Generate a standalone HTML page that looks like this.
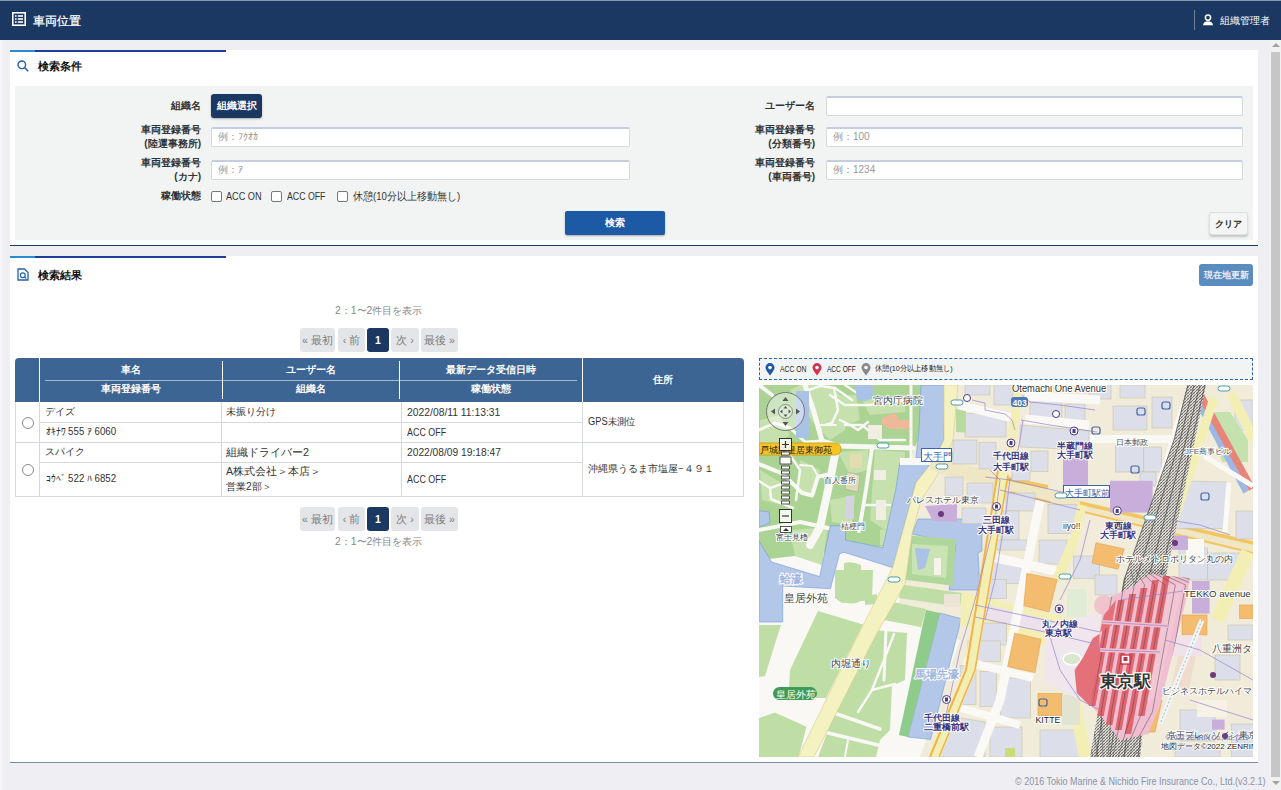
<!DOCTYPE html>
<html lang="ja">
<head>
<meta charset="utf-8">
<style>
*{box-sizing:border-box;margin:0;padding:0}
html,body{width:1281px;height:790px;overflow:hidden}
body{position:relative;background:#eeeef3;font-family:"Liberation Sans",sans-serif;color:#333;font-size:11px}
.abs{position:absolute}
#hdr{left:0;top:0;width:1281px;height:40px;background:#1b3862;border-top:1px solid #8d99ab}
#hdr .t{left:33px;top:11px;color:#fff;font-size:12.2px;-webkit-text-stroke:0.25px #fff;line-height:18px;white-space:nowrap}
#hdr .u{left:1220px;top:13px;color:#fff;font-size:9.5px;line-height:14px;white-space:nowrap}
#hdr .sep{left:1194px;top:9px;width:1px;height:20px;background:#6f7f98}
.panel{background:#fff}
.lbl{font-weight:bold;color:#333;font-size:10px;line-height:14px;text-align:right;white-space:nowrap}
.inp{background:#fff;border:1px solid #d6d9de;border-top:2px solid #c5cde0;border-radius:2px;color:#999;font-size:10px;line-height:15px;padding-left:6px;white-space:nowrap}
.pg{height:24px;background:#e3e5e8;border-radius:3px;color:#7d7d7d;font-size:10.5px;line-height:24px;text-align:center;white-space:nowrap}
.pg.a{background:#1b3862;color:#fff;font-weight:bold}
.cnt{color:#888;font-size:10.4px;line-height:14px;white-space:nowrap}
table{border-collapse:collapse}
.th{color:#fff;font-weight:bold;font-size:9.5px;text-align:center;white-space:nowrap;line-height:14px}
.td{color:#333;font-size:10px;line-height:14px;white-space:nowrap}
.hl{background:#d5d9dc}
.cb{width:11px;height:11px;border:1px solid #777;border-radius:2px;background:#fff}
.lg{font-size:8.5px;line-height:12px;color:#222;white-space:nowrap}
.cbl{font-size:10.5px;line-height:14px;color:#333;white-space:nowrap}
</style>
</head>
<body>
<!-- left page strip -->
<div class="abs" style="left:0;top:40px;width:2px;height:750px;background:#f6f6f9"></div>

<!-- header -->
<div id="hdr" class="abs">
  <svg class="abs" style="left:12px;top:11px" width="14" height="14" viewBox="0 0 14 14">
    <rect x="0.8" y="0.8" width="12.4" height="12.4" fill="none" stroke="#fff" stroke-width="1.6"/>
    <rect x="3" y="3.2" width="1.6" height="1.6" fill="#fff"/><rect x="5.8" y="3.2" width="5.2" height="1.6" fill="#fff"/>
    <rect x="3" y="6.2" width="1.6" height="1.6" fill="#fff"/><rect x="5.8" y="6.2" width="5.2" height="1.6" fill="#fff"/>
    <rect x="3" y="9.2" width="1.6" height="1.6" fill="#fff"/><rect x="5.8" y="9.2" width="5.2" height="1.6" fill="#fff"/>
  </svg>
  <div class="abs t">車両位置</div>
  <div class="abs sep"></div>
  <svg class="abs" style="left:1202px;top:13px" width="12" height="12" viewBox="0 0 12 12">
    <circle cx="6" cy="3.6" r="2.6" fill="none" stroke="#fff" stroke-width="1.5"/>
    <path d="M1 11.2 Q1.5 7.2 6 7.2 Q10.5 7.2 11 11.2 Z" fill="#fff"/>
  </svg>
  <div class="abs u">組織管理者</div>
</div>

<!-- scrollbar -->
<div class="abs" style="left:1269px;top:40px;width:12px;height:750px;background:#f1f1f1"></div>
<div class="abs" style="left:1271px;top:52px;width:9px;height:725px;background:#c6c6c6"></div>
<div class="abs" style="left:1272px;top:43px;width:0;height:0;border-left:4px solid transparent;border-right:4px solid transparent;border-bottom:4px solid #a3a3a3"></div>
<div class="abs" style="left:1272px;top:781px;width:0;height:0;border-left:4px solid transparent;border-right:4px solid transparent;border-top:4px solid #a3a3a3"></div>

<!-- panel 1 -->
<div class="abs panel" style="left:10px;top:50px;width:1248px;height:196px;border-bottom:1px solid #1b3862"></div>
<div class="abs" style="left:10px;top:50px;width:25px;height:2px;background:#2b8ad0"></div>
<div class="abs" style="left:35px;top:50px;width:191px;height:2px;background:#1d3f96"></div>
<svg class="abs" style="left:17px;top:60px" width="12" height="12" viewBox="0 0 12 12">
  <circle cx="4.8" cy="4.8" r="3.8" fill="none" stroke="#2563a8" stroke-width="1.4"/>
  <line x1="7.6" y1="7.6" x2="11.2" y2="11.2" stroke="#2563a8" stroke-width="1.5"/>
</svg>
<div class="abs" style="left:38px;top:58px;font-size:11px;line-height:16px;font-weight:bold;color:#111">検索条件</div>

<div class="abs" style="left:15px;top:86px;width:1238px;height:154px;background:#f1f4f3"></div>

<div class="abs lbl" style="left:100px;top:99px;width:101px">組織名</div>
<div class="abs" style="left:211px;top:94px;width:51px;height:24px;background:#1b3862;border-radius:3px;color:#fff;font-weight:bold;font-size:9.75px;line-height:24px;text-align:center;box-shadow:0 1px 2px rgba(0,0,0,.3)">組織選択</div>
<div class="abs lbl" style="left:700px;top:99px;width:115px">ユーザー名</div>
<div class="abs inp" style="left:826px;top:96px;width:417px;height:20px"></div>

<div class="abs lbl" style="left:100px;top:123px;width:101px">車両登録番号<br>(陸運事務所)</div>
<div class="abs inp" style="left:211px;top:127px;width:419px;height:20px">例：ﾌｸｵｶ</div>
<div class="abs lbl" style="left:700px;top:123px;width:115px">車両登録番号<br>(分類番号)</div>
<div class="abs inp" style="left:826px;top:127px;width:417px;height:20px">例：100</div>

<div class="abs lbl" style="left:100px;top:156px;width:101px">車両登録番号<br>(カナ)</div>
<div class="abs inp" style="left:211px;top:160px;width:419px;height:20px">例：ｱ</div>
<div class="abs lbl" style="left:700px;top:156px;width:115px">車両登録番号<br>(車両番号)</div>
<div class="abs inp" style="left:826px;top:160px;width:417px;height:20px">例：1234</div>

<div class="abs lbl" style="left:100px;top:189px;width:101px">稼働状態</div>
<div class="abs cb" style="left:211px;top:191px"></div><div class="abs cbl" style="left:226px;top:189px;transform:scaleX(.87);transform-origin:0 0">ACC ON</div>
<div class="abs cb" style="left:271px;top:191px"></div><div class="abs cbl" style="left:287px;top:189px;transform:scaleX(.835);transform-origin:0 0">ACC OFF</div>
<div class="abs cb" style="left:337px;top:191px"></div><div class="abs cbl" style="left:353px;top:189px;transform:scaleX(.91);transform-origin:0 0">休憩(10分以上移動無し)</div>

<div class="abs" style="left:565px;top:211px;width:100px;height:24px;background:#1d5aa6;border-radius:2px;color:#fff;font-weight:bold;font-size:9.5px;line-height:24px;text-align:center;box-shadow:0 1px 2px rgba(0,0,0,.3)">検索</div>
<div class="abs" style="left:1209px;top:212px;width:39px;height:23px;background:#f4f6f6;border:1px solid #dde0e0;border-radius:3px;color:#222;font-weight:bold;font-size:9.4px;line-height:21px;text-align:center;box-shadow:0 2px 2px rgba(0,0,0,.18)">クリア</div>

<!-- panel 2 -->
<div class="abs panel" style="left:10px;top:256px;width:1248px;height:507px;border-bottom:1px solid #7a8aa3"></div>
<div class="abs" style="left:10px;top:256px;width:25px;height:2px;background:#2b8ad0"></div>
<div class="abs" style="left:35px;top:256px;width:191px;height:2px;background:#1d3f96"></div>
<svg class="abs" style="left:17px;top:268px" width="12" height="13" viewBox="0 0 12 13">
  <path d="M1 1 H7.5 L11 4.5 V12 H1 Z" fill="none" stroke="#2563a8" stroke-width="1.3"/>
  <circle cx="5.8" cy="7.2" r="2.4" fill="none" stroke="#2563a8" stroke-width="1.2"/>
  <line x1="7.4" y1="8.8" x2="9.2" y2="10.6" stroke="#2563a8" stroke-width="1.2"/>
</svg>
<div class="abs" style="left:38px;top:267px;font-size:11px;line-height:16px;font-weight:bold;color:#111">検索結果</div>
<div class="abs" style="left:1199px;top:264px;width:54px;height:22px;background:#5b8cc0;border-radius:3px;color:#e8eef6;font-weight:bold;font-size:8.5px;line-height:22px;text-align:center">現在地更新</div>

<!-- counts + pagination -->
<div class="abs cnt" style="left:335px;top:304px">2：1〜2件目を表示</div>
<div class="abs pg" style="left:300px;top:328px;width:35px">« 最初</div>
<div class="abs pg" style="left:338px;top:328px;width:27px">‹ 前</div>
<div class="abs pg a" style="left:367px;top:328px;width:22px">1</div>
<div class="abs pg" style="left:391px;top:328px;width:28px">次 ›</div>
<div class="abs pg" style="left:421px;top:328px;width:37px">最後 »</div>

<div class="abs pg" style="left:300px;top:507px;width:35px">« 最初</div>
<div class="abs pg" style="left:338px;top:507px;width:27px">‹ 前</div>
<div class="abs pg a" style="left:367px;top:507px;width:22px">1</div>
<div class="abs pg" style="left:391px;top:507px;width:28px">次 ›</div>
<div class="abs pg" style="left:421px;top:507px;width:37px">最後 »</div>
<div class="abs cnt" style="left:335px;top:535px">2：1〜2件目を表示</div>

<!-- TABLE -->
<div id="tbl" class="abs" style="left:15px;top:358px;width:729px;height:139px">
  <div class="abs" style="left:0;top:0;width:729px;height:44px;background:#3d6594;border-radius:4px 4px 0 0"></div>
  <div class="abs" style="left:24px;top:0;width:1px;height:44px;background:#fff"></div>
  <div class="abs" style="left:207px;top:3px;width:1px;height:38px;background:#fff"></div>
  <div class="abs" style="left:384px;top:3px;width:1px;height:38px;background:#fff"></div>
  <div class="abs" style="left:567px;top:0;width:1px;height:44px;background:#fff"></div>
  <div class="abs" style="left:30px;top:22px;width:532px;height:1px;background:rgba(255,255,255,.55)"></div>
  <div class="abs th" style="left:24px;top:5px;width:183px">車名</div>
  <div class="abs th" style="left:24px;top:24px;width:183px">車両登録番号</div>
  <div class="abs th" style="left:207px;top:5px;width:177px">ユーザー名</div>
  <div class="abs th" style="left:207px;top:24px;width:177px">組織名</div>
  <div class="abs th" style="left:384px;top:5px;width:183px">最新データ受信日時</div>
  <div class="abs th" style="left:384px;top:24px;width:183px">稼働状態</div>
  <div class="abs th" style="left:567px;top:15px;width:162px">住所</div>
  <!-- body borders -->
  <div class="abs hl" style="left:0;top:44px;width:1px;height:95px"></div>
  <div class="abs hl" style="left:728px;top:44px;width:1px;height:95px"></div>
  <div class="abs hl" style="left:24px;top:44px;width:1px;height:95px"></div>
  <div class="abs hl" style="left:206px;top:44px;width:1px;height:95px"></div>
  <div class="abs hl" style="left:386px;top:44px;width:1px;height:95px"></div>
  <div class="abs hl" style="left:567px;top:44px;width:1px;height:95px"></div>
  <div class="abs hl" style="left:24px;top:64px;width:543px;height:1px"></div>
  <div class="abs hl" style="left:0;top:84px;width:729px;height:1px"></div>
  <div class="abs hl" style="left:24px;top:104px;width:543px;height:1px"></div>
  <div class="abs hl" style="left:0;top:138px;width:729px;height:1px"></div>
  <div class="abs" style="left:7px;top:59px;width:12px;height:12px;border:1px solid #8a8a8a;border-radius:50%;background:#fff"></div>
  <div class="abs" style="left:7px;top:106px;width:12px;height:12px;border:1px solid #8a8a8a;border-radius:50%;background:#fff"></div>
  <div class="abs td" style="left:30px;top:47px">デイズ</div>
  <div class="abs td" style="left:31px;top:67px;transform:scaleX(.97);transform-origin:0 0">ｵｷﾅﾜ 555 ｱ 6060</div>
  <div class="abs td" style="left:30px;top:87px;font-size:10.3px">スパイク</div>
  <div class="abs td" style="left:31px;top:114px;transform:scaleX(.97);transform-origin:0 0">ｺｳﾍﾞ 522 ﾊ 6852</div>
  <div class="abs td" style="left:211px;top:47px">未振り分け</div>
  <div class="abs td" style="left:211px;top:87px;font-size:10.75px">組織ドライバー2</div>
  <div class="abs td" style="left:211px;top:106px;font-size:10.55px">A株式会社＞本店＞</div>
  <div class="abs td" style="left:211px;top:122px;font-size:10.25px">営業2部＞</div>
  <div class="abs td" style="left:392px;top:47px;font-size:10.5px;transform:scaleX(.985);transform-origin:0 0">2022/08/11 11:13:31</div>
  <div class="abs td" style="left:392px;top:67px;font-size:10.5px;transform:scaleX(.85);transform-origin:0 0">ACC OFF</div>
  <div class="abs td" style="left:392px;top:87px;font-size:10.5px;transform:scaleX(.975);transform-origin:0 0">2022/08/09 19:18:47</div>
  <div class="abs td" style="left:392px;top:114px;font-size:10.5px;transform:scaleX(.85);transform-origin:0 0">ACC OFF</div>
  <div class="abs td" style="left:573px;top:57px;transform:scaleX(.93);transform-origin:0 0">GPS未測位</div>
  <div class="abs td" style="left:573px;top:104px;font-size:9.5px">沖縄県うるま市塩屋−４９１</div>
</div>

<!-- MAP -->
<div class="abs" style="left:759px;top:358px;width:494px;height:22px;background:#f1f4f3;border:1px dashed #2a63a8"></div>
<svg class="abs" style="left:765px;top:363px" width="10" height="13" viewBox="0 0 10 13"><path d="M5,12.5 C2,8.5 0.5,6.5 0.5,4.6 A4.5,4.5 0 0 1 9.5,4.6 C9.5,6.5 8,8.5 5,12.5 Z" fill="#1e56a8"/><circle cx="5" cy="4.6" r="1.8" fill="#fff"/></svg>
<div class="abs lg" style="left:780px;top:363px;transform:scaleX(.8);transform-origin:0 0">ACC ON</div>
<svg class="abs" style="left:812px;top:363px" width="10" height="13" viewBox="0 0 10 13"><path d="M5,12.5 C2,8.5 0.5,6.5 0.5,4.6 A4.5,4.5 0 0 1 9.5,4.6 C9.5,6.5 8,8.5 5,12.5 Z" fill="#d0354f"/><circle cx="5" cy="4.6" r="1.8" fill="#fff"/></svg>
<div class="abs lg" style="left:827px;top:363px;transform:scaleX(.77);transform-origin:0 0">ACC OFF</div>
<svg class="abs" style="left:861px;top:363px" width="10" height="13" viewBox="0 0 10 13"><path d="M5,12.5 C2,8.5 0.5,6.5 0.5,4.6 A4.5,4.5 0 0 1 9.5,4.6 C9.5,6.5 8,8.5 5,12.5 Z" fill="#888"/><circle cx="5" cy="4.6" r="1.8" fill="#fff"/></svg>
<div class="abs lg" style="left:875px;top:363px;font-size:8px;transform:scaleX(.9);transform-origin:0 0">休憩(10分以上移動無し)</div>
<div id="map" class="abs" style="left:759px;top:385px;width:494px;height:372px;background:#f3f0e6;overflow:hidden">
<svg width="494" height="372" viewBox="759 385 494 372" style="position:absolute;left:0;top:0">
<rect x="759" y="385" width="494" height="372" fill="#f1ebd9"/>
<!-- white plaza lower-left -->
<polygon points="759,560 850,550 905,575 895,620 960,640 920,757 759,757" fill="#f9f8f4"/>
<!-- palace green -->
<polygon points="759,385 925,385 918,440 905,470 896,545 845,550 759,560" fill="#abd394"/>
<g fill="#c6e1ad">
<polygon points="790,390 800,385 830,385 845,400 845,430 830,440 815,425"/>
<polygon points="840,395 856,395 860,420 845,425"/>
<polygon points="760,420 780,415 790,435 775,445 760,445"/>
<polygon points="838,452 868,450 868,470 850,475"/>
<polygon points="875,450 905,452 902,520 885,530 870,520"/>
<polygon points="800,460 820,470 815,495 798,490"/>
<polygon points="862,400 905,395 905,412 870,415"/>
<polygon points="760,470 785,485 782,505 762,500"/>
<polygon points="830,500 855,495 852,525 832,522"/>
<polygon points="790,530 828,527 822,565 795,556"/>
<polygon points="880,530 895,528 893,545 880,545"/>
</g>
<g stroke="#f8f8f4" fill="none" stroke-linecap="round" stroke-linejoin="round">
<polyline points="805,385 814,412 822,441 838,446 913,448" stroke-width="5"/>
<polyline points="836,450 828,490 820,527 810,545" stroke-width="8"/>
<polyline points="872,448 866,490 859,531" stroke-width="4"/>
<polyline points="911,385 911,458" stroke-width="3"/>
<polyline points="759,464 782.7,473.7 801.7,492.7 812,495.6 818,476.6 827,474.7" stroke-width="4"/><polyline points="759,481 770,488 771,499 788,506 793,508" stroke-width="2.5"/><polyline points="770,488 782,484" stroke-width="2.5"/>
<polyline points="759,430 775,423 790,428 805,442 822,441" stroke-width="3"/><polyline points="759,385 772,395" stroke-width="4"/><polyline points="809,390 820,386 835,388 845,395 852,400" stroke-width="2.5"/><polyline points="834,388 838,410 832,423 825,425" stroke-width="2.5"/><polyline points="840,420 850,425 858,430 868,422" stroke-width="2.5"/><polyline points="820,425 836,425" stroke-width="2"/><polyline points="800,465 812,466 818,476" stroke-width="2"/>
<polyline points="830,395 845,405 870,405 905,400" stroke-width="2.5"/>
<polyline points="845,425 862,425 880,440 905,440" stroke-width="2.5"/>
<polyline points="759,530 800,522 828,528" stroke-width="4"/>
<polyline points="860,395 845,385" stroke-width="2.5"/>
<polyline points="866,505 890,505" stroke-width="2.5"/>
<polyline points="790,455 800,470 796,500" stroke-width="2.5"/>
</g>
<rect x="796" y="391" width="13" height="47" fill="#a9c2e6"/>
<polygon points="882,418 895,413 900,420 909,420 909,429 890,429 882,424" fill="#eeb89a"/>
<rect x="868" y="425" width="14" height="14" fill="#f0eee2"/>
<rect x="850" y="454" width="12" height="14" fill="#e2ddb0"/>
<polygon points="847,472 860,475 858,492 845,489" fill="#dcdcb8" stroke="#a8a890" stroke-width="0.6"/>
<rect x="846" y="496" width="8" height="23" fill="#d4d4e0"/>
<rect x="874" y="470" width="12" height="10" fill="#f0eee2"/>
<rect x="876" y="500" width="10" height="20" fill="#f0eee2"/>
<path d="M856,385 h17 v10 q-3,6 -10,6 q-7,0 -7,-8 z" fill="#a9c2e6"/>
<!-- moats -->
<g fill="#b3c7e9" stroke="#6f9bd6" stroke-width="0.6">
<polygon points="921,385 945,385 944,440 935,458 916,458 919,430"/>
<polygon points="759,541 771.7,562 819.7,576.6 830.4,525.7 845.6,525.7 845.6,540.1 882.8,547.7 895.7,490 899.7,463.3 929,463.3 929,466.3 916,482.5 892.7,567.5 844,552.3 839.5,553.8 830.4,588.7 782.7,586 782.7,622 759,622"/>
<polygon points="759,510.6 769,512 770,523 759,527"/>
<polygon points="918,519 982,519 982,551 978,553 980,590 949,590 956,544 912,534"/>
<polygon points="939.7,613 961.3,618.7 930.6,739.4 907.8,737"/>
</g>
<polygon points="926,610 940,613 908,737 899,735" fill="#8fcb8a"/>
<!-- wadakura island -->
<polygon points="906.8,535.2 955.4,539.2 953.4,585.8 904.8,579.7" fill="#b0d79b"/>
<polygon points="912,544 948,546 946,578 912,574" fill="#c9e3b3"/>
<polygon points="915,548 930,549 925,568 918,570" fill="#a9c2e6"/>
<rect x="934" y="558" width="7" height="17" fill="#f5f3ea"/>
<!-- lawns -->
<g fill="#bfdea6">
<polygon points="901,584.5 962,593 960,607 899,598"/>
<polygon points="888,601 926,609 921,627 884,620"/>
<path d="M844,563 q8,-2 17,2 l1,35 q-8,6 -18,2 z"/>
<path d="M865,596 l12,-2 l0,10 l-12,1 z"/>
<polygon points="835,570 873,570 872,600 842,603 835,598"/>
<polygon points="759,625 781,625 773,650 765,676 759,677"/>
<polygon points="818,611 863,624.5 826,698 800,698 789,688 790,670"/>
<polygon points="774.8,712.5 806.5,726.8 798.6,757 759,757 759,718"/>
<polygon points="862,629 907,633 905,680 892,686 890,730 880,740 876,757 818,757 835,712 850,680"/>
</g>
<rect x="944" y="594" width="16" height="13" fill="#ece4d4"/>
<g stroke="#f9f8f4" fill="none" stroke-linecap="round"><polyline points="894,634 884,660 872,690 858,712" stroke-width="2.5"/><polyline points="886,630 884,680" stroke-width="3"/><polyline points="872,690 895,684" stroke-width="2.5"/><polyline points="834,713 880,729" stroke-width="3.5"/><polyline points="828,733 878,745" stroke-width="3.5"/><polyline points="848,740 845,757" stroke-width="2"/></g>
<!-- uchibori road -->
<polygon points="944,385 958,385 953,440 937,476 921,500 912,534 905,584 876,635 814,757 798,757 858,635 892.7,567.5 916,482.5 929,466.3 935,458 944,440" fill="#f4f2c0" stroke="#d9c98a" stroke-width="0.6"/>
<polygon points="900,458 960,458 960,465 900,465" fill="#f8f8f4"/>
<!-- eitai dori band (beige w/ orange) -->
<polygon points="930,458 1008,474 1080,500 1253,541 1253,554 1080,512 1005,492 930,470" fill="#efe6c6"/>
<polyline points="1008,479 1048,487" stroke="#f3c55e" stroke-width="4" fill="none"/>
<polyline points="1080,503 1253,543" stroke="#f3c55e" stroke-width="3.5" fill="none"/>
<polyline points="1010,492 1050,502" stroke="#f3c55e" stroke-width="2" fill="none"/>
<polyline points="1080,511 1253,553" stroke="#f3c55e" stroke-width="2" fill="none"/>
<!-- gyoko dori band -->
<polygon points="962,592 1045,612 1100,625 1100,655 1045,645 960,625" fill="#f3efb4"/>
<polygon points="975,602 1100,632 1100,646 975,616" fill="#ece2ec"/>
<!-- city blocks -->
<g fill="#dcdfea" stroke="#c8c3a4" stroke-width="0.6">
<rect x="965" y="385" width="25" height="10"/>
<rect x="994" y="385" width="19" height="20"/>
<rect x="965" y="413.5" width="41" height="23.5"/>
<rect x="1030" y="398" width="32" height="19"/>
<polygon points="1020,425 1089,431 1089,450 1020,447"/>
<rect x="953" y="440" width="24" height="24"/>
<rect x="979" y="442.5" width="17" height="26.5"/>
<rect x="1031" y="451" width="17" height="20.6"/>
<rect x="1012" y="469" width="18" height="11.5"/>
<rect x="945" y="477" width="18" height="19"/>
<rect x="967" y="483" width="26" height="20"/>
<rect x="962" y="508" width="24" height="15.5"/>
<rect x="1006" y="493" width="29" height="18"/>
<rect x="1048" y="504.5" width="29" height="29.2"/>
<rect x="1001" y="511" width="18" height="29"/>
<rect x="1089" y="385" width="22" height="14"/>
<rect x="1120" y="385" width="25" height="13"/>
<rect x="1115.4" y="445.3" width="28.4" height="26.7"/>
<rect x="1143.8" y="447" width="17.7" height="25"/>
<rect x="1140" y="472" width="16" height="14"/>
<rect x="1113" y="406" width="34" height="24"/>
<rect x="1152" y="397" width="20" height="31"/>
<polygon points="1181,480.8 1227,482 1227,528.6 1174,528.6"/>
<rect x="1236" y="511" width="17" height="28"/>
<rect x="1235" y="400" width="18" height="30"/>
<rect x="994" y="540" width="33" height="10"/>
<rect x="1039" y="540" width="28" height="24"/>
<rect x="990" y="559" width="33" height="24.5"/>
<rect x="984" y="579.5" width="22.6" height="19.2"/>
<rect x="1073.4" y="556" width="26.3" height="22.5"/>
<rect x="1179" y="548" width="28.6" height="32"/>
<rect x="1207.6" y="553" width="31.9" height="27"/>
<rect x="972" y="623" width="34.6" height="22"/>
<rect x="968" y="641" width="32.5" height="20.5"/>
<rect x="960" y="665.5" width="16" height="39"/>
<rect x="980" y="671.6" width="16.4" height="35"/>
<rect x="1000.5" y="678" width="30" height="40"/>
<polygon points="942,715 985,722 985,757 935,757"/>
<rect x="990" y="727" width="32" height="30"/>
<rect x="1180" y="710" width="35" height="31"/>
<rect x="1231.5" y="724" width="22" height="33"/>
<rect x="1175" y="745" width="45" height="12"/>
<rect x="1215" y="655" width="25" height="25"/>
<rect x="1228" y="625" width="25" height="15"/>
<rect x="1040" y="730" width="45" height="27"/>
<rect x="1095" y="575" width="22" height="20" />
</g>
<polygon points="956,409 966,410 966,432.5 956,432" fill="#b8da9f"/>
<rect x="1065" y="404" width="20" height="17" fill="#dcdfea" stroke="#c8c3a4" stroke-width="0.6"/>
<!-- green patch & expressway -->
<polygon points="1208,412 1230,412 1248,440 1248,462 1222,462" fill="#c3e2ae"/>
<polyline points="1189,385 1246,492" stroke="#9cb8e6" stroke-width="6" fill="none"/>
<polyline points="1195,385 1252,489" stroke="#e8857a" stroke-width="7" fill="none"/>
<!-- white roads city -->
<g stroke="#faf9f5" fill="none">
<polyline points="959,405 1012,418" stroke-width="9"/><polyline points="1025,396 1100,400" stroke-width="9"/>
<polyline points="1025,419 1089,425" stroke-width="9"/>
<polyline points="1040,501 1000,700 978,757" stroke-width="9"/>
<polyline points="992,557 1061,572" stroke-width="9"/>
<polyline points="964,661 1033,678" stroke-width="8"/>
<polyline points="953,706 1020,725" stroke-width="8"/>
<polyline points="1184,405 1150.9,514.4 1135,560" stroke-width="7"/>
<polyline points="1090,439 1172,439" stroke-width="8"/>
<polyline points="1204,456 1253,486" stroke-width="5"/>
<polyline points="1228.8,482.5 1225,532" stroke-width="5"/>

</g>
<rect x="1186" y="539" width="18" height="25" fill="#faf9f5"/>
<!-- yellow roads -->
<g stroke="#f3efb4" fill="none">
<polyline points="1019,385 1008,470" stroke-width="8"/>
<polyline points="1214,398 1175.7,514.4 1160,570" stroke-width="9"/>
<polyline points="1231,393 1254,440" stroke-width="10"/>
<polyline points="1074,540 1057,580" stroke-width="10"/>
<polyline points="1248,552 1217,620" stroke-width="14"/>
<polyline points="1072,690 1085,757" stroke-width="12"/>
<polyline points="1082,505 1074,540" stroke-width="9"/>
</g>
<!-- hibiya dori cream with orange -->
<polyline points="1003,470 992,540 970,670 934,757" stroke="#f3efb4" stroke-width="12" fill="none"/>
<polyline points="998,470 987,540 966,670 930,757" stroke="#f2b24c" stroke-width="2" fill="none"/>
<polyline points="1008,475 997,540 975,670 939,757" stroke="#f2b24c" stroke-width="1.5" fill="none"/>
<!-- purple -->
<g fill="#c9aedb">
<polygon points="925,506 957,504 957,522 933,521"/>
<rect x="1063" y="457.7" width="25" height="27.9"/>
<rect x="1110" y="480.8" width="42.6" height="31.8"/>
<rect x="1168.6" y="535.7" width="19.4" height="14.2"/>
<rect x="1192" y="581" width="17.6" height="32.6"/>
<rect x="1212" y="719.6" width="12.6" height="10"/>
</g>
<!-- orange -->
<g fill="#f4bc6e" stroke="#e0a050" stroke-width="0.6">
<polygon points="1026.8,573.4 1057.2,579.5 1049,611.9 1023.8,605.8"/>
<polygon points="1014.7,633.2 1041,639.2 1035,672.6 1007.6,666.6"/>
<rect x="1038" y="693.5" width="24" height="22"/>
<polygon points="1096,542.8 1124.3,549 1118,569.3 1092,563"/>
<rect x="1239.5" y="605" width="13.5" height="13.6"/>
<rect x="1182" y="615" width="25" height="20"/>
<polygon points="1149,700 1162,700 1155,732 1147,732"/>
</g>
<rect x="1062" y="695" width="18" height="30" fill="#e2e4d2"/>
<!-- station plaza -->
<polygon points="1045,627 1100,613 1100,690 1080,700 1045,682" fill="#efe6ee"/>
<ellipse cx="1072" cy="659" rx="9" ry="6" fill="#d8e8cc" stroke="#fff" stroke-width="1.5"/>
<rect x="1067" y="589" width="20" height="28" fill="#e0ecd6"/>
<rect x="1172" y="635" width="30" height="21" fill="#f1e2ea"/><polygon points="1178,656 1196,656 1188,693 1170,693" fill="#f0dccc"/><polyline points="1202,620 1160,724" stroke="#f4f4f8" stroke-width="5" fill="none"/><polyline points="1202,620 1160,724" stroke="#6ab08a" stroke-width="0.7" stroke-dasharray="2 2" fill="none"/><rect x="1197" y="700" width="30" height="17" fill="#f6f2e6"/>
<!-- railway -->
<defs><pattern id="xh" width="3" height="3" patternUnits="userSpaceOnUse"><rect width="3" height="3" fill="#e2ded6"/><path d="M0,3 L3,0 M-1,1 L1,-1 M2,4 L4,2" stroke="#5a5a5a" stroke-width="0.8"/><path d="M0,0 L3,3" stroke="#8a8a8a" stroke-width="0.5"/></pattern></defs>
<polygon points="1187,385 1206,385 1195,440 1165,580 1155,620 1140,757 1090,757 1100,700 1124,580 1174,440" fill="url(#xh)"/>
<g stroke="#444" stroke-width="0.7" fill="none">
<polyline points="1188,385 1174,440 1124,580 1096,757"/>
<polyline points="1194,385 1180,440 1136,580 1110,757"/>
<polyline points="1200,385 1186,440 1148,580 1124,757"/>
<polyline points="1205,385 1192,440 1160,580 1138,757"/>
</g>
<!-- station -->
<polygon points="1104,600 1130,588 1150,574 1190,578 1186,600 1160,705 1148,734 1120,740 1100,715 1092,707 1099.6,661 1099.6,633.8" fill="#f1bfd0"/>
<circle cx="1104" cy="605" r="10" fill="#f0c4cc"/>
<polygon points="1165.6,586 1183.8,581.4 1156.5,697.5 1145,702" fill="#f3c6d6"/>

<g fill="#e2666f"><polygon points="1105.8,612 1112.4,612 1095.4,706 1088.8,706"/><polygon points="1118.1,600 1124.7,600 1103.8,716 1097.2,716"/><polygon points="1129.4,594 1136.0,594 1112.4,725 1105.8,725"/><polygon points="1140.7,588 1147.3,588 1121.7,730 1115.1,730"/><polygon points="1152.3,580 1158.9,580 1131.2,734 1124.6,734"/><polygon points="1163.2,576 1169.8,576 1144.6,716 1138.0,716"/></g>
<clipPath id="trk"><polygon points="1104,600 1130,588 1150,574 1190,578 1186,600 1160,705 1148,734 1120,740 1100,715 1092,707 1099.6,661 1099.6,633.8"/><polygon points="1187,385 1206,385 1195,440 1165,580 1155,620 1140,757 1090,757 1100,700 1124,580 1174,440"/></clipPath>
<g stroke="#444" stroke-width="0.6" opacity="0.8" fill="none" clip-path="url(#trk)"><polyline points="1117.5,570 1103.5,585 1080.7,712 1093.0,757"/><polyline points="1122.0,570 1113.8,585 1090.9,712 1098.0,757"/><polyline points="1126.5,570 1124.0,585 1101.2,712 1103.0,757"/><polyline points="1131.0,570 1134.3,585 1111.4,712 1108.0,757"/><polyline points="1135.5,570 1144.5,585 1121.7,712 1113.0,757"/><polyline points="1140.0,570 1154.8,585 1131.9,712 1118.0,757"/><polyline points="1144.5,570 1165.0,585 1142.2,712 1123.0,757"/><polyline points="1149.0,570 1175.3,585 1152.4,712 1128.0,757"/><polyline points="1153.5,570 1185.5,585 1162.7,712 1133.0,757"/><polyline points="1158.0,570 1195.8,585 1172.9,712 1138.0,757"/><polyline points="1162.5,570 1206.0,585 1183.2,712 1143.0,757"/></g>
<polygon points="1099.6,633.8 1092.8,638.3 1083.7,656.5 1074.6,670.2 1076.8,693 1090.5,706.6 1092.8,688.4 1099.6,661" fill="#e4707a"/>
<polygon points="1104,615 1116,600 1112,625 1100,632" fill="#e4707a"/>
<g stroke="#f1bfd0" stroke-width="4" fill="none"><polyline points="1102,622 1168,626"/><polyline points="1100,650 1160,652"/></g>
<g stroke="#8a78c8" stroke-width="0.6" fill="none"><polyline points="1102,622 1168,626"/><polyline points="1100,650 1160,652"/><polyline points="1120,600 1190,590"/></g>
<rect x="1121" y="655" width="9" height="9" fill="#fff" stroke="#c03040" stroke-width="1.3"/><rect x="1123.5" y="657" width="4" height="4" fill="#c03040"/>
<rect x="1005" y="748" width="10" height="9" fill="#c8dc78"/>
<!-- purple underground outlines -->
<g stroke="#9b86cf" stroke-width="0.8" fill="none" opacity="0.9">
<polyline points="972,400 985,403 985,410 1005,414 1012,420 1015,430"/><polyline points="1022,395 1030,402 1060,405 1095,410"/><polyline points="1021,420 1050,425 1097,432"/><polyline points="1023,420 1020,440 1016,460"/>
<polyline points="985,477 1010,480 1040,487 1075,495"/>
<polyline points="1000,490 1040,500 1080,510"/>
<polyline points="990,470 1000,480 995,520 985,560 975,600 960,650 945,720"/>
<polyline points="1010,478 1005,520 995,580 985,620"/>
<polyline points="975,605 1045,620 1100,632"/>
<polyline points="975,617 1045,632 1100,645"/>
<polyline points="1045,620 1060,670 1080,700 1100,710"/>
<polyline points="1090,520 1080,560 1060,600"/>
<polyline points="1170,520 1200,525 1230,535"/>
<polyline points="1165,640 1200,650 1253,680"/>
<polyline points="1190,700 1253,720"/>
</g>
</svg>

<svg width="494" height="372" viewBox="759 385 494 372" style="position:absolute;left:0;top:0" font-family="Liberation Sans, sans-serif">
<g fill="#444" stroke="#fff" stroke-width="2" paint-order="stroke" stroke-linejoin="round">
<text x="873" y="404" font-size="9.5">宮内庁病院</text>
<text x="824" y="483" font-size="7.8">百人番所</text>
<text x="841" y="528.5" font-size="7.5">桔梗門</text>
<text x="776" y="539.5" font-size="7.8">富士見櫓</text>
<text x="783.5" y="602" font-size="11.2">皇居外苑</text>
<text x="831" y="667" font-size="9.5">内堀通り</text>
<text x="907" y="503" font-size="9.4">パレスホテル東京</text>
<text x="1063" y="528.5" font-size="8.5" fill="#333">iiyo!!</text>
<text x="1116" y="445" font-size="7.8" fill="#555">日本郵政</text>
<text x="1185" y="454" font-size="7.8" fill="#555">JFE商事ビル</text>
<text x="1116" y="562" font-size="9.2">ホテルメトロポリタン丸の内</text>
<text x="1184" y="597" font-size="9.6" fill="#333">TEKKO avenue</text>
<text x="1212" y="652" font-size="9.5">八重洲ター</text>
<text x="1161.5" y="694" font-size="9.3">ビジネスホテルハイマ</text>
<text x="1035.5" y="722.8" font-size="8.8" fill="#222">KITTE</text>
<text x="1167" y="738" font-size="9.2">京王プレッソイン東京</text>
<text x="1012" y="392" font-size="10.2" fill="#333" transform="translate(1012 0) scale(.92 1) translate(-1012 0)">Otemachi One Avenue</text>
<text x="1100" y="687" font-size="16.5" fill="#333" stroke-width="2.5" font-weight="bold">東京駅</text>
</g>
<g font-size="9.3" fill="#3a3580" stroke="#fff" stroke-width="2" paint-order="stroke" stroke-linejoin="round" font-weight="bold">
<text x="993" y="459">千代田線</text><text x="993" y="469.5">大手町駅</text>
<text x="1057" y="449">半蔵門線</text><text x="1057" y="457.5">大手町駅</text>
<text x="983" y="523">三田線</text><text x="978" y="533">大手町駅</text>
<text x="1105" y="528.6">東西線</text><text x="1099.5" y="538.3">大手町駅</text>
<text x="1042" y="627">丸ノ内線</text><text x="1045" y="636">東京駅</text>
<text x="924" y="720.7">千代田線</text><text x="923.8" y="730.3">二重橋前駅</text>
</g>
<g fill="#9fb5e0" stroke="#fff" stroke-width="1.8" paint-order="stroke" font-weight="bold">
<text x="780" y="582.5" font-size="11">蛤濠</text>
<text x="914.6" y="677.5" font-size="11.2">馬場先濠</text>
</g>
<!-- boxed labels -->
<rect x="921.5" y="448.5" width="30" height="13" fill="#fff" stroke="#3f64a6" stroke-width="1"/>
<text x="923" y="459.5" font-size="9.5" fill="#3f64a6">大手門</text>
<rect x="1063.5" y="485.5" width="46" height="12" fill="#fff" stroke="#3f64a6" stroke-width="1"/>
<text x="1065" y="496" font-size="8.8" fill="#3f64a6">大手町駅前</text>
<rect x="1011" y="397" width="17" height="10" rx="3" fill="#4a78b8"/>
<text x="1012.5" y="405.5" font-size="8.5" fill="#fff" font-weight="bold">403</text>
<!-- yellow label -->
<path d="M759,443 h76 q5.5,0 6,6 q-0.5,6 -6,6 h-76 z" fill="#f6c425" stroke="#c89a10" stroke-width="0.8"/>
<text x="760" y="453" font-size="9.4" fill="#222">戸城跡皇居東御苑</text>
<!-- green label -->
<rect x="773" y="687" width="44" height="13" rx="6.5" fill="#3f9a55"/>
<text x="776" y="697.5" font-size="9.8" fill="#fff">皇居外苑</text>
<!-- station icons -->
<g fill="#fff" stroke="#4a3a90" stroke-width="1">
<circle cx="1011" cy="443" r="4"/><circle cx="1074" cy="431" r="4"/><circle cx="996.5" cy="506.5" r="4"/>
<circle cx="1117.2" cy="510.9" r="4"/><circle cx="1059.2" cy="608.8" r="4"/><circle cx="946.5" cy="699.5" r="4"/>
<circle cx="967" cy="398" r="3.5"/><circle cx="1056" cy="414" r="3.5"/>
</g>
<g fill="#4a3a90"><rect x="1009.5" y="441" width="3" height="4"/><rect x="1072.5" y="429" width="3" height="4"/><rect x="995" y="504.5" width="3" height="4"/><rect x="1115.7" y="509" width="3" height="4"/><rect x="1057.7" y="607" width="3" height="4"/><rect x="945" y="697.5" width="3" height="4"/></g>
<g fill="#fff" stroke="#4a9aa8" stroke-width="1">
<rect x="951" y="400" width="12" height="5" rx="2.5"/><rect x="936" y="464" width="12" height="5" rx="2.5"/>
<rect x="877" y="443" width="12" height="5" rx="2.5"/><rect x="888" y="577" width="12" height="5" rx="2.5"/>
<rect x="1055" y="493" width="12" height="5" rx="2.5"/><rect x="1144" y="515" width="12" height="5" rx="2.5"/>
<rect x="1059" y="574" width="12" height="5" rx="2.5"/><rect x="1218" y="386" width="12" height="5" rx="2.5"/>
</g>
<!-- purple H -->
<g fill="#6a3a7a"><circle cx="941" cy="514" r="3"/><circle cx="1175" cy="543" r="3"/><circle cx="1225" cy="736" r="3"/><circle cx="1213" cy="675" r="3"/></g>
<!-- blue building icons -->
<g fill="none" stroke="#3f64a6" stroke-width="1.2">
<rect x="1162" y="402" width="8" height="7" rx="2"/><rect x="1131" y="466" width="8" height="7" rx="2"/>
<rect x="1137" y="408" width="8" height="7" rx="2"/><rect x="1201" y="493" width="8" height="7" rx="2"/>
<rect x="1092" y="427" width="8" height="7" rx="2"/><rect x="1039" y="699" width="8" height="7" rx="2"/>
</g>
<!-- nav control -->
<circle cx="785.5" cy="411.5" r="19" fill="rgba(255,255,255,0.4)" stroke="#777" stroke-width="1"/>
<circle cx="785.5" cy="411.5" r="7" fill="rgba(255,255,255,0.3)" stroke="#777" stroke-width="0.8"/>
<g fill="#555">
<path d="M785.5,397 l-3,4 h6 z"/><path d="M785.5,426 l-3,-4 h6 z"/><path d="M771,411.5 l4,-3 v6 z"/><path d="M800,411.5 l-4,-3 v6 z"/>
<path d="M785.5,406 l-2,2.5 h4 z"/><path d="M785.5,417 l-2,-2.5 h4 z"/><path d="M780,411.5 l2.5,-2 v4 z"/><path d="M791,411.5 l-2.5,-2 v4 z"/>
</g>
<!-- zoom slider -->
<rect x="779.5" y="438.5" width="12" height="12" fill="rgba(255,255,255,.85)" stroke="#333" stroke-width="1"/>
<path d="M782,444.5 h7 M785.5,441 v7" stroke="#333" stroke-width="1.2"/>
<g fill="#fff" stroke="#333" stroke-width="0.8">
<rect x="781.5" y="452" width="8" height="3"/><rect x="780" y="457" width="11" height="7"/>
<rect x="781.5" y="466" width="8" height="3"/><rect x="781.5" y="471" width="8" height="3"/><rect x="781.5" y="476" width="8" height="3"/>
<rect x="781.5" y="481" width="8" height="3"/><rect x="781.5" y="486" width="8" height="3"/><rect x="781.5" y="491" width="8" height="3"/>
<rect x="781.5" y="496" width="8" height="3"/><rect x="781.5" y="501" width="8" height="3"/>
</g>
<rect x="779.5" y="509.5" width="12" height="13" fill="rgba(255,255,255,.85)" stroke="#333" stroke-width="1"/>
<path d="M782,516 h7" stroke="#333" stroke-width="1.2"/>
<rect x="780.5" y="526.5" width="11" height="6" fill="#fff" stroke="#333" stroke-width="0.8"/>
<path d="M786,528 l-3,3 h6 z" fill="#333"/>
<!-- copyright -->
<text x="1165.5" y="740" font-size="7.5" fill="#5a6a9a" transform="translate(1165.5 0) scale(.85 1) translate(-1165.5 0)">©2022 ZENRIN Co.,Ltd. (Z19</text>
<text x="1161" y="749" font-size="8" fill="#222" stroke="#fff" stroke-width="1.5" paint-order="stroke">地図データ©2022 ZENRIN</text>
</svg>

</div>

<div class="abs" style="left:1015px;top:775px;color:#8894a6;font-size:10px;line-height:13px;white-space:nowrap;transform:scaleX(.9);transform-origin:0 0">© 2016 Tokio Marine &amp; Nichido Fire Insurance Co., Ltd.(v3.2.1)</div>
</body>
</html>
